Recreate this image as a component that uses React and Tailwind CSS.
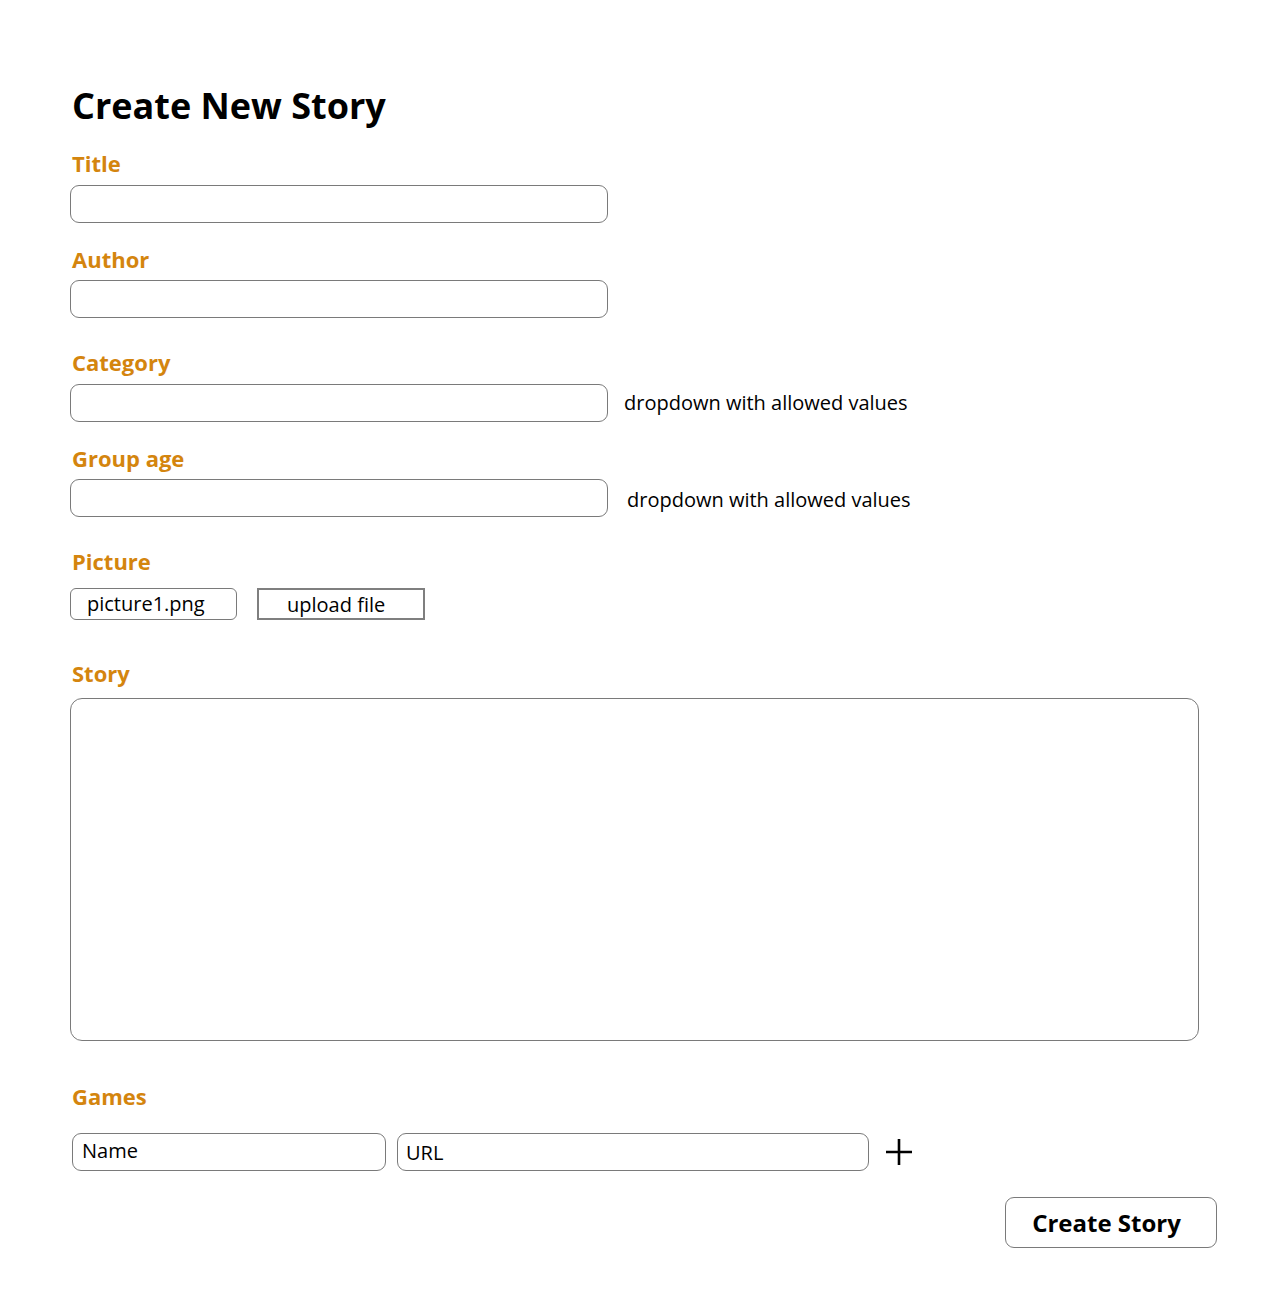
import React, { useState } from "react";

const Label = ({ children, className = "" }) => (
    <div className={`text-[22px] leading-6 font-bold text-[#d4850e] ${className}`}>{children}</div>
);

const Field = ({ className = "", ...props }) => (
    <input
        type="text"
        className={`h-[38px] border border-[#7a7a7a] rounded-[9px] bg-white outline-none px-3 text-[20px] text-black placeholder:text-black ${className}`}
        {...props}
    />
);

const App = () => {
    const [title, setTitle] = useState("");
    const [author, setAuthor] = useState("");
    const [category, setCategory] = useState("");
    const [groupAge, setGroupAge] = useState("");
    const [story, setStory] = useState("");
    const [gameName, setGameName] = useState("");
    const [gameUrl, setGameUrl] = useState("");

    return (
        <div
            className="min-h-[1300px] bg-white text-black pl-[70px] pt-[82px]"
            style={{ fontFamily: '"Open Sans", "Noto Sans", sans-serif' }}
        >
            <h1 className="text-[36px] leading-[48px] font-bold pl-[2px]">Create New Story</h1>

            <Label className="mt-[21px] mb-[10px] pl-[2px]">Title</Label>
            <Field className="w-[538px]" value={title} onChange={(e) => setTitle(e.target.value)} />

            <Label className="mt-[24px] mb-[9px] pl-[2px]">Author</Label>
            <Field className="w-[538px]" value={author} onChange={(e) => setAuthor(e.target.value)} />

            <Label className="mt-[32px] mb-[10px] pl-[2px]">Category</Label>
            <div className="flex items-center gap-4 h-[38px]">
                <Field className="w-[538px]" value={category} onChange={(e) => setCategory(e.target.value)} />
                <span className="text-[20px] leading-6">dropdown with allowed values</span>
            </div>

            <Label className="mt-[24px] mb-[9px] pl-[2px]">Group age</Label>
            <div className="flex items-center gap-[19px] h-[38px]">
                <Field className="w-[538px]" value={groupAge} onChange={(e) => setGroupAge(e.target.value)} />
                <span className="text-[20px] leading-6 pt-[3px]">dropdown with allowed values</span>
            </div>

            <Label className="mt-[32px] mb-[15px] pl-[2px]">Picture</Label>
            <div className="flex items-center gap-5 h-[32px]">
                <div className="w-[167px] h-[32px] border border-[#7a7a7a] rounded-[6px] flex items-center pl-4 text-[20px] leading-6">
                    picture1.png
                </div>
                <button className="w-[168px] h-[32px] border-2 border-[#7f7f7f] flex items-center pl-[28px] pt-[2px] text-[20px] leading-6">
                    upload file
                </button>
            </div>

            <Label className="mt-[41px] mb-[13px] pl-[2px]">Story</Label>
            <textarea
                className="block w-[1129px] h-[343px] border border-[#7a7a7a] rounded-[12px] outline-none resize-none p-3 text-[20px]"
                value={story}
                onChange={(e) => setStory(e.target.value)}
            />

            <Label className="mt-[43px] mb-[25px] pl-[2px]">Games</Label>
            <div className="flex items-center pl-[2px] h-[38px]">
                <Field
                    className="w-[314px] px-[9px] pb-[3px]"
                    placeholder="Name"
                    value={gameName}
                    onChange={(e) => setGameName(e.target.value)}
                />
                <Field
                    className="w-[472px] ml-[11px] px-[8px]"
                    placeholder="URL"
                    value={gameUrl}
                    onChange={(e) => setGameUrl(e.target.value)}
                />
                <button className="ml-[17px] w-[26px] h-[26px]">
                    <svg width="26" height="26" viewBox="0 0 26 26">
                        <path d="M13 0V26M0 13H26" stroke="#000" strokeWidth="2.6" />
                    </svg>
                </button>
            </div>

            <div className="w-[1147px] flex justify-end mt-[26px]">
                <button className="w-[212px] h-[51px] border border-[#7a7a7a] rounded-[9px] text-[24px] leading-8 font-bold pr-[9px]">
                    Create Story
                </button>
            </div>
        </div>
    );
};

export default App;
